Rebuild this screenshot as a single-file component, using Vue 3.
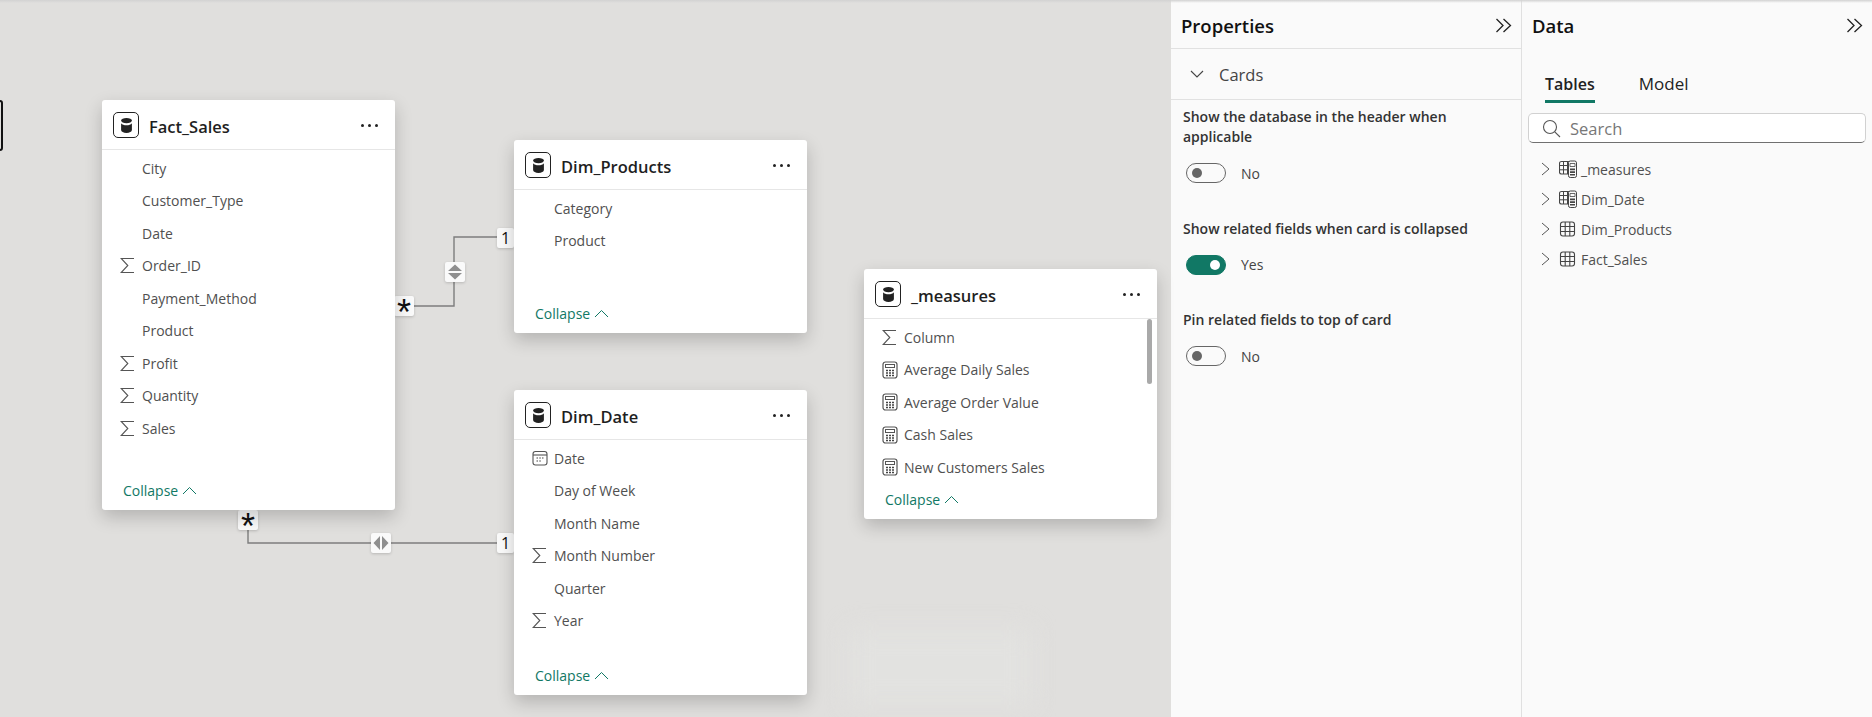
<template>
  <div class="page">
    <div class="canvas">
      <div class="edge-tab"></div>
      <div class="watermark"></div>

      <svg class="links" width="1171" height="717">
        <path d="M413 306 H454 V237 H497" />
        <path d="M248 529 V543 H497" />
      </svg>

      <div class="marker marker-star" style="left:394px;top:296px"><span>*</span></div>
      <div class="marker marker-star" style="left:238px;top:510px"><span>*</span></div>
      <div class="marker" style="left:497px;top:228px;width:17px">1</div>
      <div class="marker" style="left:497px;top:533px;width:17px">1</div>

      <div class="marker" style="left:445px;top:262px">
        <svg width="16" height="16" viewBox="0 0 16 16"><path class="dir" d="M8 0.500 15 7H1Z M8 15.500 15 9H1Z" /></svg>
      </div>
      <div class="marker" style="left:371px;top:533px">
        <svg width="16" height="16" viewBox="0 0 16 16"><path class="dir" d="M0.500 8 7 1V15Z M15.500 8 9 1V15Z" /></svg>
      </div>

      <section
        v-for="card in cards"
        :key="card.name"
        class="card"
        :style="{ left: card.x + 'px', top: card.y + 'px', height: card.h + 'px' }"
      >
        <header class="card-head">
          <span class="db-icon">
            <svg width="17" height="17" viewBox="0 0 17 17">
              <ellipse cx="8.500" cy="3.600" rx="5.400" ry="2.600" fill="#222" />
              <path d="M3.100 6.200c1 1.500 3 2 5.400 2s4.400-.5 5.400-2v6.800c0 1.700-2.400 2.900-5.400 2.900s-5.400-1.200-5.400-2.900z" fill="#222" />
            </svg>
          </span>
          <span class="card-title">{{ card.name }}</span>
          <span class="dots"><i></i><i></i><i></i></span>
        </header>

        <div class="card-body">
          <div v-for="row in card.rows" :key="row.label" class="field">
            <span class="field-icon">
              <svg v-if="row.icon === 'sum'" width="15" height="17" viewBox="0 0 15 17">
                <path d="M14 1.500H1.200L7.800 8.500 1.200 15.500H14" fill="none" stroke="#555" stroke-width="1.100" />
              </svg>
              <svg v-else-if="row.icon === 'calc'" width="16" height="18" viewBox="0 0 16 18">
                <rect x="1" y="1" width="14" height="16" rx="2.500" fill="none" stroke="#555" stroke-width="1.200" />
                <rect x="3.500" y="3.500" width="9" height="3" fill="none" stroke="#555" />
                <path d="M4 9.500h2M7 9.500h2M10 9.500h2M4 12h2M7 12h2M10 12h2M4 14.500h2M7 14.500h2M10 14.500h2" stroke="#444" stroke-width="1.500" />
              </svg>
              <svg v-else-if="row.icon === 'date'" width="16" height="16" viewBox="0 0 16 16">
                <rect x="1" y="1.500" width="14" height="13.500" rx="2.500" fill="none" stroke="#555" stroke-width="1.100" />
                <path d="M1 5h14" stroke="#555" stroke-width="1.100" />
                <path d="M4.500 8h1.500M7.300 8h1.500M10 8h1.500M4.500 11h1.500M7.300 11h1.500" stroke="#444" stroke-width="1.200" />
              </svg>
            </span>
            <span class="field-name">{{ row.label }}</span>
          </div>
        </div>

        <div class="scroll-thumb" v-if="card.scroll"></div>

        <div class="collapse">
          Collapse
          <svg width="15" height="9" viewBox="0 0 15 9"><path d="M1 8 7.500 1.500 14 8" fill="none" stroke="#117865" stroke-width="1" /></svg>
        </div>
      </section>
    </div>

    <aside class="panel panel-props">
      <div class="panel-head">
        <h2>Properties</h2>
        <svg class="chevrons" width="17" height="15" viewBox="0 0 17 15"><path d="M1.500 1 8 7.500 1.500 14M8.500 1 15.500 7.500 8.500 14" fill="none" stroke="#222" stroke-width="1.300" /></svg>
      </div>
      <div class="section-head">
        <svg width="14" height="8" viewBox="0 0 14 8"><path d="M1 1 7 7 13 1" fill="none" stroke="#444" stroke-width="1.100" /></svg>
        <span>Cards</span>
      </div>
      <div class="options">
        <div v-for="opt in options" :key="opt.label" class="option">
          <div class="option-label">{{ opt.label }}</div>
          <div class="toggle-row">
            <span class="toggle" :class="{ on: opt.on }"><i></i></span>
            <span class="toggle-text">{{ opt.on ? 'Yes' : 'No' }}</span>
          </div>
        </div>
      </div>
    </aside>

    <aside class="panel panel-data">
      <div class="panel-head plain">
        <h2>Data</h2>
        <svg class="chevrons" width="17" height="15" viewBox="0 0 17 15"><path d="M1.500 1 8 7.500 1.500 14M8.500 1 15.500 7.500 8.500 14" fill="none" stroke="#222" stroke-width="1.300" /></svg>
      </div>
      <div class="tabs">
        <span class="tab active">Tables</span>
        <span class="tab">Model</span>
      </div>
      <div class="search">
        <svg width="19" height="19" viewBox="0 0 19 19"><circle cx="8" cy="8" r="6.500" fill="none" stroke="#555" stroke-width="1.100" /><path d="M12.800 12.800 18 18" stroke="#555" stroke-width="1.100" /></svg>
        <span>Search</span>
      </div>
      <ul class="tree">
        <li v-for="t in tables" :key="t.name">
          <svg width="9" height="14" viewBox="0 0 9 14"><path d="M1 1 8 7 1 13" fill="none" stroke="#555" stroke-width="1" /></svg>
          <svg class="table-icon" width="18" height="18" viewBox="0 0 18 18">
            <template v-if="t.calc">
              <rect x="0.500" y="1.500" width="12" height="12.500" rx="2" fill="none" stroke="#444" stroke-width="1.100" />
              <path d="M0.500 5.500h12M0.500 9.800h12M4.500 1.500v12.500M8.500 1.500v12.500" stroke="#444" stroke-width="1" />
              <rect x="9.500" y="1" width="8" height="16.500" rx="1.800" fill="#fafafa" stroke="#444" stroke-width="1" />
              <path d="M11 8.500h5v1.700h-5zM11 11.200h5v1.700h-5zM11 13.900h5v1.700h-5z" fill="#444" />
              <path d="M11 3.500h5V6.500h-5z" fill="none" stroke="#444" stroke-width=".8" />
            </template>
            <template v-else>
              <rect x="1.500" y="2" width="14" height="14" rx="2.500" fill="none" stroke="#444" stroke-width="1.100" />
              <path d="M1.500 6.500h14M1.500 11.500h14M6.200 2v14M10.800 2v14" stroke="#444" stroke-width="1.100" />
            </template>
          </svg>
          <span>{{ t.name }}</span>
        </li>
      </ul>
    </aside>
  </div>
</template>

<script setup>
const f = (label, icon = '') => ({ label, icon })

const cards = [
  {
    name: 'Fact_Sales', x: 102, y: 100, h: 410,
    rows: [f('City'), f('Customer_Type'), f('Date'), f('Order_ID', 'sum'), f('Payment_Method'), f('Product'), f('Profit', 'sum'), f('Quantity', 'sum'), f('Sales', 'sum')]
  },
  {
    name: 'Dim_Products', x: 514, y: 140, h: 193,
    rows: [f('Category'), f('Product')]
  },
  {
    name: 'Dim_Date', x: 514, y: 390, h: 305,
    rows: [f('Date', 'date'), f('Day of Week'), f('Month Name'), f('Month Number', 'sum'), f('Quarter'), f('Year', 'sum')]
  },
  {
    name: '_measures', x: 864, y: 269, h: 250, scroll: true,
    rows: [f('Column', 'sum'), f('Average Daily Sales', 'calc'), f('Average Order Value', 'calc'), f('Cash Sales', 'calc'), f('New Customers Sales', 'calc')]
  }
]

const options = [
  { label: 'Show the database in the header when applicable', on: false },
  { label: 'Show related fields when card is collapsed', on: true },
  { label: 'Pin related fields to top of card', on: false }
]

const tables = [
  { name: '_measures', calc: true },
  { name: 'Dim_Date', calc: true },
  { name: 'Dim_Products', calc: false },
  { name: 'Fact_Sales', calc: false }
]
</script>

<style>
html, body {
  margin: 0;
  overflow: hidden;
}
</style>

<style scoped>
.page {
  width: 1872px;
  height: 717px;
  display: flex;
  position: relative;
  overflow: hidden;
  font-family: "Open Sans", "Noto Sans", sans-serif;
  color: #222;
  background: #fafafa;
}

.page::before {
  content: "";
  position: absolute;
  left: 0;
  right: 0;
  top: 0;
  height: 3px;
  background: linear-gradient(#d2d2d2, #ececec00);
  z-index: 5;
}

.canvas {
  width: 1171px;
  flex: none;
  position: relative;
  background: #e0dfdd;
}

.edge-tab {
  position: absolute;
  left: -4px;
  top: 100px;
  width: 3px;
  height: 47px;
  border: 2px solid #111;
  border-radius: 3px;
}

.watermark {
  position: absolute;
  left: 850px;
  top: 630px;
  width: 180px;
  height: 75px;
  background: #e2e2e0;
  filter: blur(12px);
}

.links {
  position: absolute;
  left: 0;
  top: 0;
}

.links path {
  fill: none;
  stroke: #7d7d7d;
  stroke-width: 1.400;
}

.marker {
  position: absolute;
  width: 20px;
  height: 20px;
  display: flex;
  align-items: center;
  justify-content: center;
  background: #fafafa;
  border-radius: 2px;
  box-shadow: 0 1px 3px rgba(0, 0, 0, .18);
  font-size: 16px;
  color: #111;
}

.marker-star {
  font-size: 36px;
  font-family: "Liberation Sans", sans-serif;
}

.marker-star span {
  display: block;
  line-height: 20px;
  transform: translateY(7px);
}

.dir {
  fill: #8f8f8f;
}

.card {
  position: absolute;
  width: 293px;
  display: flex;
  flex-direction: column;
  background: #fff;
  border-radius: 3px;
  box-shadow: 0 7px 18px rgba(0, 0, 0, .2);
}

.card-head {
  height: 50px;
  box-sizing: border-box;
  flex: none;
  display: flex;
  align-items: center;
  padding: 1px 17px 0 11px;
  border-bottom: 1px solid #e6e6e6;
}

.db-icon {
  width: 24px;
  height: 24px;
  flex: none;
  display: flex;
  align-items: center;
  justify-content: center;
  border: 1.500px solid #222;
  border-radius: 5px;
}

.card-title {
  margin-left: 10px;
  padding-top: 2px;
  font-size: 16.500px;
  font-weight: 600;
  color: #1f1f1f;
  flex: 1;
}

.dots {
  display: flex;
  gap: 4px;
}

.dots i {
  width: 3px;
  height: 3px;
  border-radius: 50%;
  background: #222;
}

.card-body {
  flex: 1;
  min-height: 0;
  padding-top: 2px;
}

.field {
  height: 32.500px;
  display: flex;
  align-items: center;
  padding-left: 18px;
}

.field-icon {
  width: 22px;
  flex: none;
  display: flex;
  align-items: center;
}

.field-name {
  font-size: 14px;
  color: #505050;
}

.scroll-thumb {
  position: absolute;
  left: 283px;
  top: 50px;
  width: 5px;
  height: 65px;
  border-radius: 3px;
  background: #a9a9a9;
}

.collapse {
  flex: none;
  height: 40px;
  display: flex;
  align-items: center;
  gap: 4px;
  padding-left: 21px;
  font-size: 14px;
  color: #117865;
}

.panel {
  box-sizing: border-box;
  background: #fafafa;
}

.panel-props {
  width: 351px;
  border-right: 1px solid #e0e0e0;
}

.panel-data {
  flex: 1;
}

.panel-head {
  height: 49px;
  display: flex;
  align-items: center;
  justify-content: space-between;
  padding: 2px 9px 0 10px;
  box-sizing: border-box;
  border-bottom: 1px solid #e1e1e1;
}

.panel-head.plain {
  border-bottom: 0;
}

.panel-head h2 {
  margin: 0;
  font-size: 18.500px;
  font-weight: 600;
  color: #111;
}

.section-head {
  height: 51px;
  box-sizing: border-box;
  display: flex;
  align-items: center;
  gap: 15px;
  padding-left: 19px;
  border-bottom: 1px solid #e1e1e1;
  font-size: 16.500px;
  color: #444;
}

.options {
  padding: 7px 12px 0;
}

.option {
  margin-bottom: 35.500px;
}

.option-label {
  font-size: 14px;
  font-weight: 600;
  line-height: 20px;
  color: #333;
}

.toggle-row {
  display: flex;
  align-items: center;
  margin-top: 16px;
  padding-left: 3px;
}

.toggle {
  width: 40px;
  height: 20px;
  box-sizing: border-box;
  border: 1px solid #666;
  border-radius: 10px;
  display: flex;
  align-items: center;
  padding: 0 5px;
}

.toggle i {
  width: 10px;
  height: 10px;
  border-radius: 50%;
  background: #666;
}

.toggle.on {
  background: #117865;
  border-color: #117865;
  justify-content: flex-end;
}

.toggle.on i {
  background: #fff;
}

.toggle-text {
  margin-left: 15px;
  font-size: 14px;
  color: #444;
}

.tabs {
  display: flex;
  gap: 44px;
  height: 64px;
  padding: 16px 0 0 23px;
  box-sizing: border-box;
}

.tab {
  height: 38px;
  line-height: 38px;
  font-size: 17px;
  color: #222;
  box-sizing: border-box;
}

.tab.active {
  font-size: 16px;
  font-weight: 600;
  border-bottom: 3px solid #117865;
}

.search {
  margin: 0 6px;
  height: 30px;
  box-sizing: border-box;
  display: flex;
  align-items: center;
  gap: 9px;
  padding-left: 13px;
  background: #fff;
  border: 1px solid #d1d1d1;
  border-bottom-color: #707070;
  border-radius: 5px;
  font-size: 16.500px;
  color: #777;
}

.tree {
  list-style: none;
  margin: 11px 0 0;
  padding: 0 0 0 19px;
}

.tree li {
  height: 30px;
  display: flex;
  align-items: center;
  font-size: 14px;
  color: #505050;
}

.table-icon {
  margin: 0 4px 0 9px;
}
</style>
